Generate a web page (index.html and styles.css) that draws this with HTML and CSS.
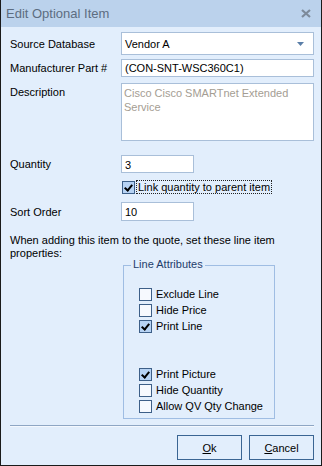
FILE: index.html
```html
<!DOCTYPE html>
<html lang="en">
<head>
    <meta charset="UTF-8">
    <title>Edit Optional Item</title>
    <link rel="stylesheet" href="styles.css">
</head>
<body>
    <div class="window">
        <div class="titlebar">
            <span class="title">Edit Optional Item</span>
            <svg class="close" width="10" height="9" viewBox="0 0 10 9">
                <path d="M1 1 L9 8 M9 1 L1 8" stroke="#7d8a9a" stroke-width="2.2"/>
            </svg>
        </div>
        <div class="content">
            <div class="row row-source">
                <label>Source Database</label>
                <div class="combo">
                    <span>Vendor A</span>
                    <svg class="arrow" width="7" height="4" viewBox="0 0 7 4"><path d="M0 0 H7 L3.5 4 Z" fill="#5a7ea8"/></svg>
                </div>
            </div>
            <div class="row row-part">
                <label>Manufacturer Part #</label>
                <div class="field wide">(CON-SNT-WSC360C1)</div>
            </div>
            <div class="row row-desc">
                <label>Description</label>
                <div class="field wide memo">Cisco Cisco SMARTnet Extended Service</div>
            </div>
            <div class="row row-qty">
                <label>Quantity</label>
                <div class="field short">3</div>
            </div>
            <div class="row row-link">
                <span class="check checked"></span>
                <span class="focus">Link quantity to parent item</span>
            </div>
            <div class="row row-sort">
                <label>Sort Order</label>
                <div class="field short">10</div>
            </div>
            <p class="note">When adding this item to the quote, set these line item properties:</p>
            <div class="group">
                <span class="group-title">Line Attributes</span>
                <div class="opt"><span class="check"></span>Exclude Line</div>
                <div class="opt"><span class="check"></span>Hide Price</div>
                <div class="opt"><span class="check checked"></span>Print Line</div>
                <div class="spacer"></div>
                <div class="opt"><span class="check checked"></span>Print Picture</div>
                <div class="opt"><span class="check"></span>Hide Quantity</div>
                <div class="opt"><span class="check"></span>Allow QV Qty Change</div>
            </div>
            <div class="separator"></div>
            <div class="buttons">
                <button><u>O</u>k</button>
                <button><u>C</u>ancel</button>
            </div>
        </div>
    </div>
</body>
</html>
```

FILE: styles.css
```css
body {
    margin: 0;
    font-family: "Liberation Sans", Arial, sans-serif;
    font-size: 11px;
    color: #000;
    background: #e2eefc;
}
.window {
    width: 322px;
    height: 466px;
    box-sizing: border-box;
    border: 1px solid #1a1a1a;
    border-top: none;
    background: #e2eefc;
}
.titlebar {
    height: 27px;
    background: #bbd2ec;
    display: flex;
    align-items: center;
    justify-content: space-between;
    padding: 0 10px 0 5px;
}
.title {
    font-size: 13px;
    color: #5d6d81;
}
.content {
    padding: 0 7px 0 9px;
}
.row {
    display: flex;
    align-items: center;
}
.row label {
    width: 111px;
    flex-shrink: 0;
}
.row-source {
    margin-top: 5px;
    height: 23px;
}
.combo {
    flex: 1;
    height: 23px;
    box-sizing: border-box;
    background: #fff;
    border: 1px solid #a9bfd9;
    display: flex;
    align-items: center;
    justify-content: space-between;
    padding: 0 9px 0 3px;
}
.field {
    height: 100%;
    box-sizing: border-box;
    background: #fff;
    border: 1px solid #a9bfd9;
    padding: 2px 3px;
    line-height: 13px;
}
.wide {
    flex: 1;
}
.short {
    width: 73px;
}
.row-part {
    margin-top: 4px;
    height: 18px;
}
.row-desc {
    margin-top: 6px;
    height: 58px;
    align-items: flex-start;
}
.row-desc label {
    padding-top: 3px;
}
.memo {
    color: #a49d93;
    line-height: 14px;
    padding: 2px 2px;
}
.row-qty {
    margin-top: 14px;
    height: 18px;
}
.row-link {
    margin-top: 7px;
    height: 14px;
    padding-left: 112px;
}
.focus {
    border: 1px dotted #222;
    padding: 0 1px;
    margin-left: 1px;
    line-height: 12px;
}
.row-sort {
    margin-top: 8px;
    height: 19px;
}
.row-sort .field, .row-qty .field {
    padding-top: 3px;
}
.check {
    display: inline-block;
    width: 13px;
    height: 13px;
    box-sizing: border-box;
    border: 1px solid #3d5f88;
    background: #f6f9fe;
    flex-shrink: 0;
    position: relative;
}
.check.checked {
    background: #b7d3f4;
}
.check.checked::after {
    content: "";
    position: absolute;
    left: 3px;
    top: 1px;
    width: 3px;
    height: 6px;
    border: solid #000;
    border-width: 0 2px 2px 0;
    transform: rotate(40deg);
}
.note {
    margin: 13px 0 0 0;
    line-height: 13px;
    padding-right: 20px;
}
.group {
    margin: 5px 0 0 113px;
    width: 152px;
    height: 154px;
    box-sizing: border-box;
    border: 1px solid #9fbde3;
    position: relative;
    padding: 20px 0 0 15px;
}
.group-title {
    position: absolute;
    top: -8px;
    left: 7px;
    padding: 0 2px;
    background: #e2eefc;
    color: #1e3d6b;
}
.opt {
    display: flex;
    align-items: center;
    gap: 4px;
    height: 16px;
}
.spacer {
    height: 32px;
}
.separator {
    margin-top: 6px;
    height: 1px;
    background: #8ea6c4;
    border-bottom: 1px solid #f4f8fe;
}
.buttons {
    display: flex;
    justify-content: flex-end;
    gap: 7px;
    margin-top: 8px;
}
button {
    width: 65px;
    height: 25px;
    background: #e2eefc;
    border: 1px solid #3a6593;
    font-family: "Liberation Sans", Arial, sans-serif;
    font-size: 11px;
    color: #000;
    padding: 0;
}
```
